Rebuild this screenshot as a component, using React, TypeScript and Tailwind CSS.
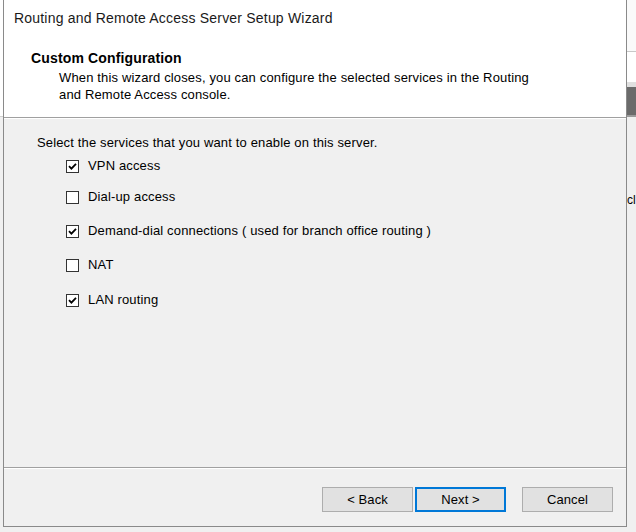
import React from 'react';

const services = [
  { label: 'VPN access', checked: true, gap: 'mt-[7px]' },
  { label: 'Dial-up access', checked: false, gap: 'mt-[15px]' },
  { label: 'Demand-dial connections ( used for branch office routing )', checked: true, gap: 'mt-[18px]' },
  { label: 'NAT', checked: false, gap: 'mt-[18px]' },
  { label: 'LAN routing', checked: true, gap: 'mt-[19px]' },
];

const CheckBox = ({ checked }: { checked: boolean }) => (
  <div className="w-[13px] h-[13px] border border-[#333333] bg-white flex items-center justify-center shrink-0">
    {checked && (
      <svg width="9" height="9" viewBox="0 0 9 9">
        <path d="M1 4.2 L3.4 6.6 L8 1.8" fill="none" stroke="#000" strokeWidth="1.8" />
      </svg>
    )}
  </div>
);

const WizButton = ({ label, focused }: { label: string; focused?: boolean }) => (
  <div
    className={`w-[91px] h-[25px] flex items-center justify-center bg-[#e1e1e1] text-[13px] tracking-[0.1px] text-black ${
      focused ? 'border-2 border-[#0078d7]' : 'border border-[#adadad]'
    }`}
  >
    {label}
  </div>
);

export default function App() {
  return (
    <div
      className="w-[636px] h-[532px] bg-[#f0f0f0] flex overflow-hidden"
      style={{ fontFamily: '"Liberation Sans", Arial, sans-serif' }}
    >
      {/* desktop behind, left edge */}
      <div className="w-[3px] flex flex-col">
        <div className="h-[117px] bg-white border-b border-[#d0d0d0]" />
        <div className="flex-1" />
      </div>

      {/* wizard window */}
      <div className="w-[624px] h-[527px] bg-[#f0f0f0] border-x border-b border-[#8a8a8a] flex flex-col">
        <div className="h-[117px] bg-white px-[10px] pt-[10px]">
          <div className="text-[14px] leading-[17px] tracking-[0.2px] text-[#1a1a1a]">
            Routing and Remote Access Server Setup Wizard
          </div>
          <div className="mt-[23px] ml-[17px] text-[14px] leading-[17px] tracking-[0.15px] font-bold text-black">
            Custom Configuration
          </div>
          <div className="mt-[2px] ml-[45px] text-[13px] leading-[17px] tracking-[0.15px] text-black">
            When this wizard closes, you can configure the selected services in the Routing
            <br />
            and Remote Access console.
          </div>
        </div>
        <div className="h-[2px] border-t border-[#a0a0a0] border-b border-b-white" />

        <div className="flex-1 pl-[33px] pt-[16px] text-[13px] tracking-[0.15px] text-black">
          <div className="leading-[16px]">Select the services that you want to enable on this server.</div>
          <div className="flex flex-col pl-[29px]">
            {services.map((s) => (
              <div key={s.label} className={`flex items-center gap-[9px] leading-[16px] ${s.gap}`}>
                <CheckBox checked={s.checked} />
                <span>{s.label}</span>
              </div>
            ))}
          </div>
        </div>

        <div className="h-[2px] border-t border-[#a0a0a0] border-b border-b-white" />
        <div className="h-[57px] flex items-start justify-end pt-[18px] pr-[13px]">
          <WizButton label="< Back" />
          <div className="w-[2px]" />
          <WizButton label="Next >" focused />
          <div className="w-[16px]" />
          <WizButton label="Cancel" />
        </div>
      </div>

      {/* desktop behind, right edge */}
      <div className="flex-1 flex flex-col">
        <div className="h-[52px] bg-[#fafafa] border-b border-[#c8c8c8]" />
        <div className="h-[30px] bg-white" />
        <div className="h-[5px] bg-[#e0e0e0]" />
        <div className="h-[30px] bg-[#6b6b6b] border-b-2 border-[#9a9a9a]" />
        <div className="flex-1 pt-[76px] text-[12px] leading-[14px] text-black">cl</div>
      </div>
    </div>
  );
}
